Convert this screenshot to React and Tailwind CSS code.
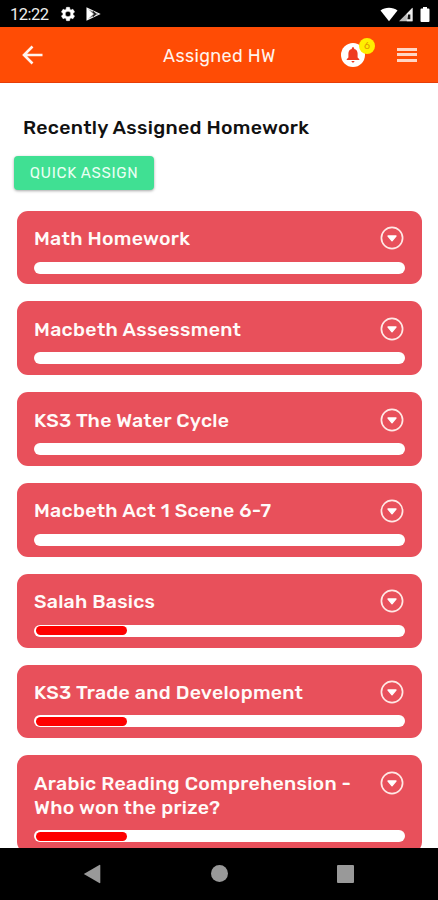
import { useLayoutEffect, useRef, useState } from "react";

// Tracks a line of text so that it spans the given width.
function Line({ width, className = "", children }) {
  const ref = useRef(null);
  const [spacing, setSpacing] = useState(0);
  useLayoutEffect(() => {
    const el = ref.current;
    el.style.letterSpacing = "0px";
    const natural = el.getBoundingClientRect().width;
    const value = (width - natural) / (children.length - 1);
    el.style.letterSpacing = `${value}px`;
    setSpacing(value);
  }, [width, children]);
  return (
    <span
      ref={ref}
      className={`inline-block whitespace-nowrap ${className}`}
      style={{ letterSpacing: `${spacing}px` }}
    >
      {children}
    </span>
  );
}

const homework = [
  { lines: [["Math Homework", 157]], started: false },
  { lines: [["Macbeth Assessment", 208]], started: false },
  { lines: [["KS3 The Water Cycle", 196]], started: false },
  { lines: [["Macbeth Act 1 Scene 6-7", 238]], started: false },
  { lines: [["Salah Basics", 122]], started: true },
  { lines: [["KS3 Trade and Development", 270]], started: true },
  {
    lines: [
      ["Arabic Reading Comprehension -", 318],
      ["Who won the prize?", 187],
    ],
    started: true,
  },
];

function StatusBar() {
  return (
    <div className="flex h-[27px] shrink-0 items-center bg-black pl-[10px] pr-[8px] text-white">
      <Line width={39} className="mt-[2px] font-['Roboto',sans-serif] text-[16.5px] leading-[27px] text-[#eee]">12:22</Line>
      <svg className="ml-[11.5px] mt-[1px] h-[16px] w-[16px]" viewBox="0 0 24 24" fill="#fff" stroke="#fff" strokeWidth="0.8">
        <path d="M19.43 12.98c.04-.32.07-.64.07-.98s-.03-.66-.07-.98l2.11-1.65c.19-.15.24-.42.12-.64l-2-3.46c-.12-.22-.39-.3-.61-.22l-2.49 1c-.52-.4-1.08-.73-1.69-.98l-.38-2.65A.488.488 0 0 0 14 2h-4c-.25 0-.46.18-.49.42l-.38 2.65c-.61.25-1.17.59-1.69.98l-2.49-1c-.23-.09-.49 0-.61.22l-2 3.46c-.13.22-.07.49.12.64l2.11 1.65c-.04.32-.07.65-.07.98s.03.66.07.98l-2.11 1.65c-.19.15-.24.42-.12.64l2 3.46c.12.22.39.3.61.22l2.49-1c.52.4 1.08.73 1.69.98l.38 2.65c.03.24.24.42.49.42h4c.25 0 .46-.18.49-.42l.38-2.65c.61-.25 1.17-.59 1.69-.98l2.49 1c.23.09.49 0 .61-.22l2-3.46c.12-.22.07-.49-.12-.64zM12 16.2a4.2 4.2 0 1 1 0-8.4 4.2 4.2 0 0 1 0 8.4z" />
      </svg>
      <svg className="ml-[10px] mt-[1px] h-[14px] w-[15px]" viewBox="0 0 15 14">
        <path d="M1 1.2v11.6L13.4 7z" fill="#777" stroke="#eee" strokeWidth="1.1" />
        <path d="M1 1v12L7.4 7z" fill="#fff" />
        <path d="M6.8 4.5 9.4 7 6.800 9.5" fill="none" stroke="#111" strokeWidth="1.1" />
      </svg>
      <svg className="ml-auto mt-[1px] h-[15px] w-[18px]" viewBox="0 0 18 15" fill="#fff">
        <path d="M.5 3.4C5-.2 13-.2 17.500 3.4L9 14.300z" />
      </svg>
      <svg className="mt-[1px] h-[15px] w-[16px]" viewBox="0 0 16 15">
        <path d="M1 14.300 14.500.8v13.500z" fill="#bbb" />
        <path d="M8.800 6.700 14.500.8v13.500H8.800z" fill="#eee" />
        <path d="M10 7.500h2.300v4.800H9.400z" fill="#111" />
      </svg>
      <svg className="ml-[6px] mt-[1px] h-[15px] w-[10px]" viewBox="0 0 10 15" fill="#fff">
        <path d="M3 0h4v1.500h1.500q1 0 1 1V14q0 1-1 1h-7q-1 0-1-1V2.500q0-1 1-1H3z" />
      </svg>
    </div>
  );
}

function Header() {
  return (
    <header className="flex h-[56px] shrink-0 items-center border-b border-[#e63d08] bg-[#ff4c05] pl-[22px] pr-[21px] text-white">
      <svg className="h-[20px] w-[21px]" viewBox="0 0 21 20" fill="none" stroke="#fff3ee" strokeWidth="2.600">
        <path d="M20.500 10H2.500M10.500 1.500 2 10l8.500 8.500" />
      </svg>
      <h1 className="ml-[120px] mt-[2px] flex text-[18px] leading-[24px]">
        <Line width={112.5} className="text-[#fff3ec]">Assigned HW</Line>
      </h1>
      <div className="relative ml-auto h-[24px] w-[24px] rounded-full bg-white">
        <svg className="h-[24px] w-[24px]" viewBox="0 0 24 24" fill="#ef3b20">
          <path d="M12 4.300c-.7 0-1.200.5-1.200 1.100v.5C8.600 6.400 7.400 8.200 7.400 10.400v4l-1.700 1.800v.9h12.600v-.9l-1.700-1.800v-4c0-2.200-1.200-4-3.400-4.500v-.5c0-.6-.5-1.100-1.200-1.100zM10.500 17.900h3c0 .9-.7 1.500-1.500 1.500s-1.500-.6-1.500-1.500z" />
        </svg>
        <span className="absolute left-[18px] top-[-5px] flex h-[16px] w-[16px] items-center justify-center rounded-full bg-[#ffef00] text-[10px] leading-none text-[#e39a00]">
          6
        </span>
      </div>
      <div className="ml-[32px] flex w-[20px] flex-col gap-[2.500px]">
        <i className="h-[3px] bg-[#ffd6c5]" />
        <i className="h-[3px] bg-[#ffd6c5]" />
        <i className="h-[3px] bg-[#ffd6c5]" />
      </div>
    </header>
  );
}

function Card({ lines, started }) {
  return (
    <section className="shrink-0 rounded-[11px] bg-[#e8505b] px-[17px] pb-[10.8px] pt-[16.4px]">
      <div className="flex items-start justify-between">
        <h3 className="flex flex-col items-start text-[19.5px] font-medium leading-[24px] text-[#fffaf8]">
          {lines.map(([text, width]) => (
            <Line key={text} width={width - 1}>{text}</Line>
          ))}
        </h3>
        <svg className="-mt-[0.800px] mr-[1.500px] h-[24px] w-[24px]" viewBox="0 0 24 24">
          <circle cx="12" cy="12" r="10.600" fill="none" stroke="#ffe9e6" strokeWidth="1.700" />
          <path d="M8 10h8L12 14.800z" fill="#fff" stroke="#fff" strokeWidth="1.300" strokeLinejoin="round" />
        </svg>
      </div>
      <div className="mt-[10.600px] flex h-[12px] items-center rounded-full bg-white pl-[1.500px]">
        {started && <div className="h-[8.500px] w-[91.500px] rounded-full bg-[#fe0000]" />}
      </div>
    </section>
  );
}

function NavBar() {
  return (
    <nav className="flex h-[52.500px] shrink-0 items-center bg-black pl-[83px]">
      <svg className="h-[20px] w-[18px]" viewBox="0 0 18 20" fill="#999">
        <path d="M.8 10 16.300 1q1-.5 1 .6v16.800q0 1.100-1 .6z" />
      </svg>
      <div className="ml-[110px] h-[17px] w-[17px] rounded-full bg-[#999]" />
      <div className="ml-[108.500px] h-[17.500px] w-[17.500px] rounded-[1px] bg-[#999]" />
    </nav>
  );
}

export default function App() {
  return (
    <div className="flex h-[900px] w-[438px] flex-col overflow-hidden bg-white font-['Rubik','Roboto',sans-serif]">
      <StatusBar />
      <Header />
      <main className="flex min-h-0 flex-1 flex-col overflow-hidden">
        <h2 className="ml-[23px] mt-[33px] flex text-[19.5px] font-medium leading-[24px] text-[#111]">
          <Line width={286}>Recently Assigned Homework</Line>
        </h2>
        <button className="ml-[14px] mt-[16px] flex h-[34px] w-[140px] shrink-0 items-center justify-center rounded-[4px] bg-[#40e093] text-[15px] text-[#eafff3] shadow-[0_1px_3px_rgba(0,0,0,0.35)]">
          <Line width={108}>QUICK ASSIGN</Line>
        </button>
        <div className="mt-[20.600px] flex flex-col gap-[17px] pl-[17px] pr-[16px]">
          {homework.map((item) => (
            <Card key={item.lines[0][0]} {...item} />
          ))}
        </div>
      </main>
      <NavBar />
    </div>
  );
}
